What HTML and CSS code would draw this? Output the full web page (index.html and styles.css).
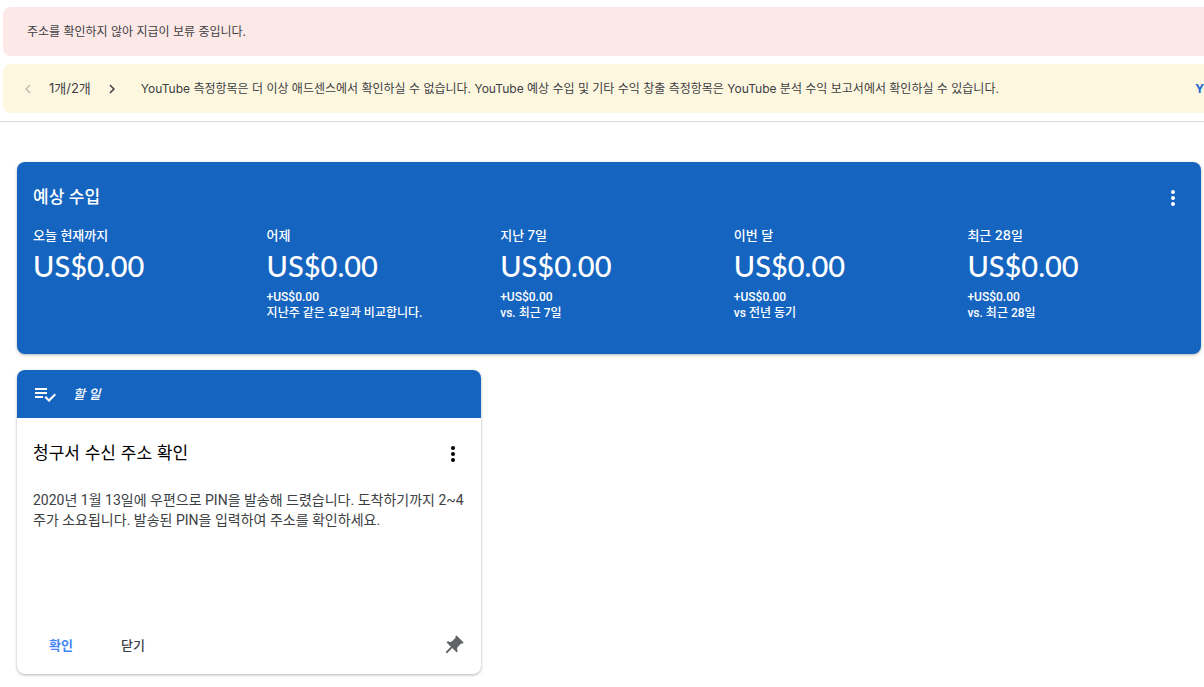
FILE: index.html
```html
<!DOCTYPE html>
<html lang="ko">
<head>
    <meta charset="UTF-8">
    <meta name="viewport" content="width=device-width, initial-scale=1.0">
    <title>애드센스 홈</title>
    <link rel="stylesheet" href="styles.css">
</head>
<body>
    <header class="alerts">
        <div class="alert alert-error">
            <p>주소를 확인하지 않아 지급이 보류 중입니다.</p>
        </div>
        <div class="alert alert-notice">
            <div class="pager">
                <button class="icon-btn" aria-label="이전" disabled>
                    <svg width="18" height="18" viewBox="0 0 24 24"><path d="M15.400 7.400 14 6l-6 6 6 6 1.400-1.400-4.600-4.600z"/></svg>
                </button>
                <span>1개/2개</span>
                <button class="icon-btn" aria-label="다음">
                    <svg width="18" height="18" viewBox="0 0 24 24"><path d="M10 6 8.600 7.400l4.600 4.600-4.600 4.600L10 18l6-6z"/></svg>
                </button>
            </div>
            <p class="notice-text">YouTube 측정항목은 더 이상 애드센스에서 확인하실 수 없습니다. YouTube 예상 수입 및 기타 수익 창출 측정항목은 YouTube 분석 수익 보고서에서 확인하실 수 있습니다.</p>
            <a class="notice-link" href="#">Y</a>
        </div>
    </header>

    <main class="content">
        <section class="card earnings">
            <div class="card-title">
                <h2>예상 수입</h2>
                <button class="icon-btn" aria-label="옵션 더보기">
                    <svg width="24" height="24" viewBox="0 0 24 24"><circle cx="12" cy="6" r="2"/><circle cx="12" cy="12" r="2"/><circle cx="12" cy="18" r="2"/></svg>
                </button>
            </div>
            <div class="metrics">
                <div class="metric">
                    <h3>오늘 현재까지</h3>
                    <p class="amount">US$0.00</p>
                </div>
                <div class="metric">
                    <h3>어제</h3>
                    <p class="amount">US$0.00</p>
                    <p class="change">+US$0.00<br>지난주 같은 요일과 비교합니다.</p>
                </div>
                <div class="metric">
                    <h3>지난 7일</h3>
                    <p class="amount">US$0.00</p>
                    <p class="change">+US$0.00<br>vs. 최근 7일</p>
                </div>
                <div class="metric">
                    <h3>이번 달</h3>
                    <p class="amount">US$0.00</p>
                    <p class="change">+US$0.00<br>vs 전년 동기</p>
                </div>
                <div class="metric">
                    <h3>최근 28일</h3>
                    <p class="amount">US$0.00</p>
                    <p class="change">+US$0.00<br>vs. 최근 28일</p>
                </div>
            </div>
        </section>

        <section class="card todo">
            <div class="todo-header">
                <svg width="24" height="24" viewBox="0 0 24 24"><path d="M14 10H2v2h12zm0-4H2v2h12zM2 16h8v-2H2zm19.500-4.500L23 13l-7 7-4.500-4.500L13 14l3 3z"/></svg>
                <em>할 일</em>
            </div>
            <div class="todo-body">
                <div class="card-title">
                    <h2>청구서 수신 주소 확인</h2>
                    <button class="icon-btn" aria-label="옵션 더보기">
                        <svg width="24" height="24" viewBox="0 0 24 24"><circle cx="12" cy="6" r="2"/><circle cx="12" cy="12" r="2"/><circle cx="12" cy="18" r="2"/></svg>
                    </button>
                </div>
                <p class="todo-text">2020년 1월 13일에 우편으로 PIN을 발송해 드렸습니다. 도착하기까지 2~4주가 소요됩니다. 발송된 PIN을 입력하여 주소를 확인하세요.</p>
            </div>
            <div class="todo-actions">
                <button class="text-btn primary">확인</button>
                <button class="text-btn">닫기</button>
                <button class="icon-btn pin" aria-label="고정">
                    <svg width="24" height="24" viewBox="0 0 24 24"><path transform="rotate(45 12 12)" d="M16 9V4h1V2H7v2h1v5c0 1.700-1.300 3-3 3v2h6v7l1 1 1-1v-7h6v-2c-1.700 0-3-1.300-3-3z"/></svg>
                </button>
            </div>
        </section>
    </main>
</body>
</html>
```
FILE: styles.css
```css
* {
    box-sizing: border-box;
}
body {
    margin: 0;
    font-family: Inter, "Noto Sans CJK KR", sans-serif;
    font-size: 12px;
    color: #3c4043;
    background-color: #fff;
}
h2, h3, p {
    margin: 0;
}
svg {
    display: block;
    fill: currentColor;
}
.icon-btn {
    display: block;
    padding: 0;
    border: none;
    background: none;
    color: inherit;
    cursor: pointer;
}
.icon-btn:disabled {
    opacity: 0.3;
}

/* alerts */
.alerts {
    display: flex;
    flex-direction: column;
    gap: 8px;
    padding: 7px 0 8px 3px;
    border-bottom: 1px solid #dadce0;
}
.alert {
    display: flex;
    align-items: center;
    height: 49px;
    border-radius: 8px 0 0 8px;
    white-space: nowrap;
}
.alert p {
    padding-bottom: 2px;
}
.alert-error {
    padding-left: 24px;
    background-color: #fce8e6;
}
.alert-notice {
    padding-left: 16px;
    background-color: #fef7e0;
}
.pager {
    display: flex;
    align-items: center;
    gap: 12px;
    font-size: 13px;
    line-height: 16px;
}
.pager span {
    padding-bottom: 2px;
}
.notice-text {
    margin-left: 20px;
}
.notice-link {
    margin-left: auto;
    color: #1967d2;
    font-weight: 700;
    text-decoration: none;
}

/* cards */
.content {
    padding: 40px 3px 13px 17px;
}
.card {
    border-radius: 8px;
    box-shadow: 0 1px 3px rgba(60, 64, 67, 0.4);
}
.card-title {
    display: flex;
    justify-content: space-between;
    align-items: center;
    padding-right: 16px;
}
.card-title h2 {
    padding-bottom: 2px;
    font-size: 17px;
    line-height: 22px;
    font-weight: 500;
}
.earnings {
    min-height: 192px;
    padding: 24px 0 24px 16px;
    background-color: #1565c0;
    color: #fff;
}
.metrics {
    display: grid;
    grid-template-columns: repeat(5, 1fr);
    margin-top: 16px;
}
.metric h3 {
    padding-bottom: 2px;
    font-size: 13px;
    line-height: 18px;
    font-weight: 500;
}
.amount {
    font-family: Lato, sans-serif;
    font-size: 29px;
    line-height: 40px;
    font-weight: 500;
}
.change {
    margin-top: 3px;
    font-family: Roboto, "Noto Sans CJK KR", sans-serif;
    font-size: 12px;
    line-height: 16px;
    font-weight: 500;
}
.todo {
    display: flex;
    flex-direction: column;
    max-width: 464px;
    min-height: 304px;
    margin-top: 16px;
    overflow: hidden;
}
.todo-header {
    display: flex;
    align-items: center;
    gap: 16px;
    height: 48px;
    padding-left: 16px;
    background-color: #1565c0;
    color: #fff;
    font-size: 13px;
    line-height: 16px;
    font-weight: 500;
}
.todo-body {
    flex: 1;
    padding: 24px 0 0 16px;
}
.todo-body .card-title {
    color: #000;
}
.todo-body h2 {
    font-weight: 400;
}
.todo-text {
    margin-top: 24px;
    padding-right: 16px;
    font-family: Roboto, "Noto Sans CJK KR", sans-serif;
    font-size: 14px;
    line-height: 20px;
    word-break: break-all;
}
.todo-actions {
    display: flex;
    align-items: center;
    padding: 12px 16px;
}
.text-btn {
    padding: 0 16px 2px;
    margin-right: 16px;
    border: none;
    background: none;
    color: inherit;
    font: 500 13px/30px Inter, "Noto Sans CJK KR", sans-serif;
    cursor: pointer;
}
.text-btn.primary {
    color: #4285f4;
    font-weight: 700;
}
.pin {
    margin-left: auto;
    color: #5f6368;
}
```
